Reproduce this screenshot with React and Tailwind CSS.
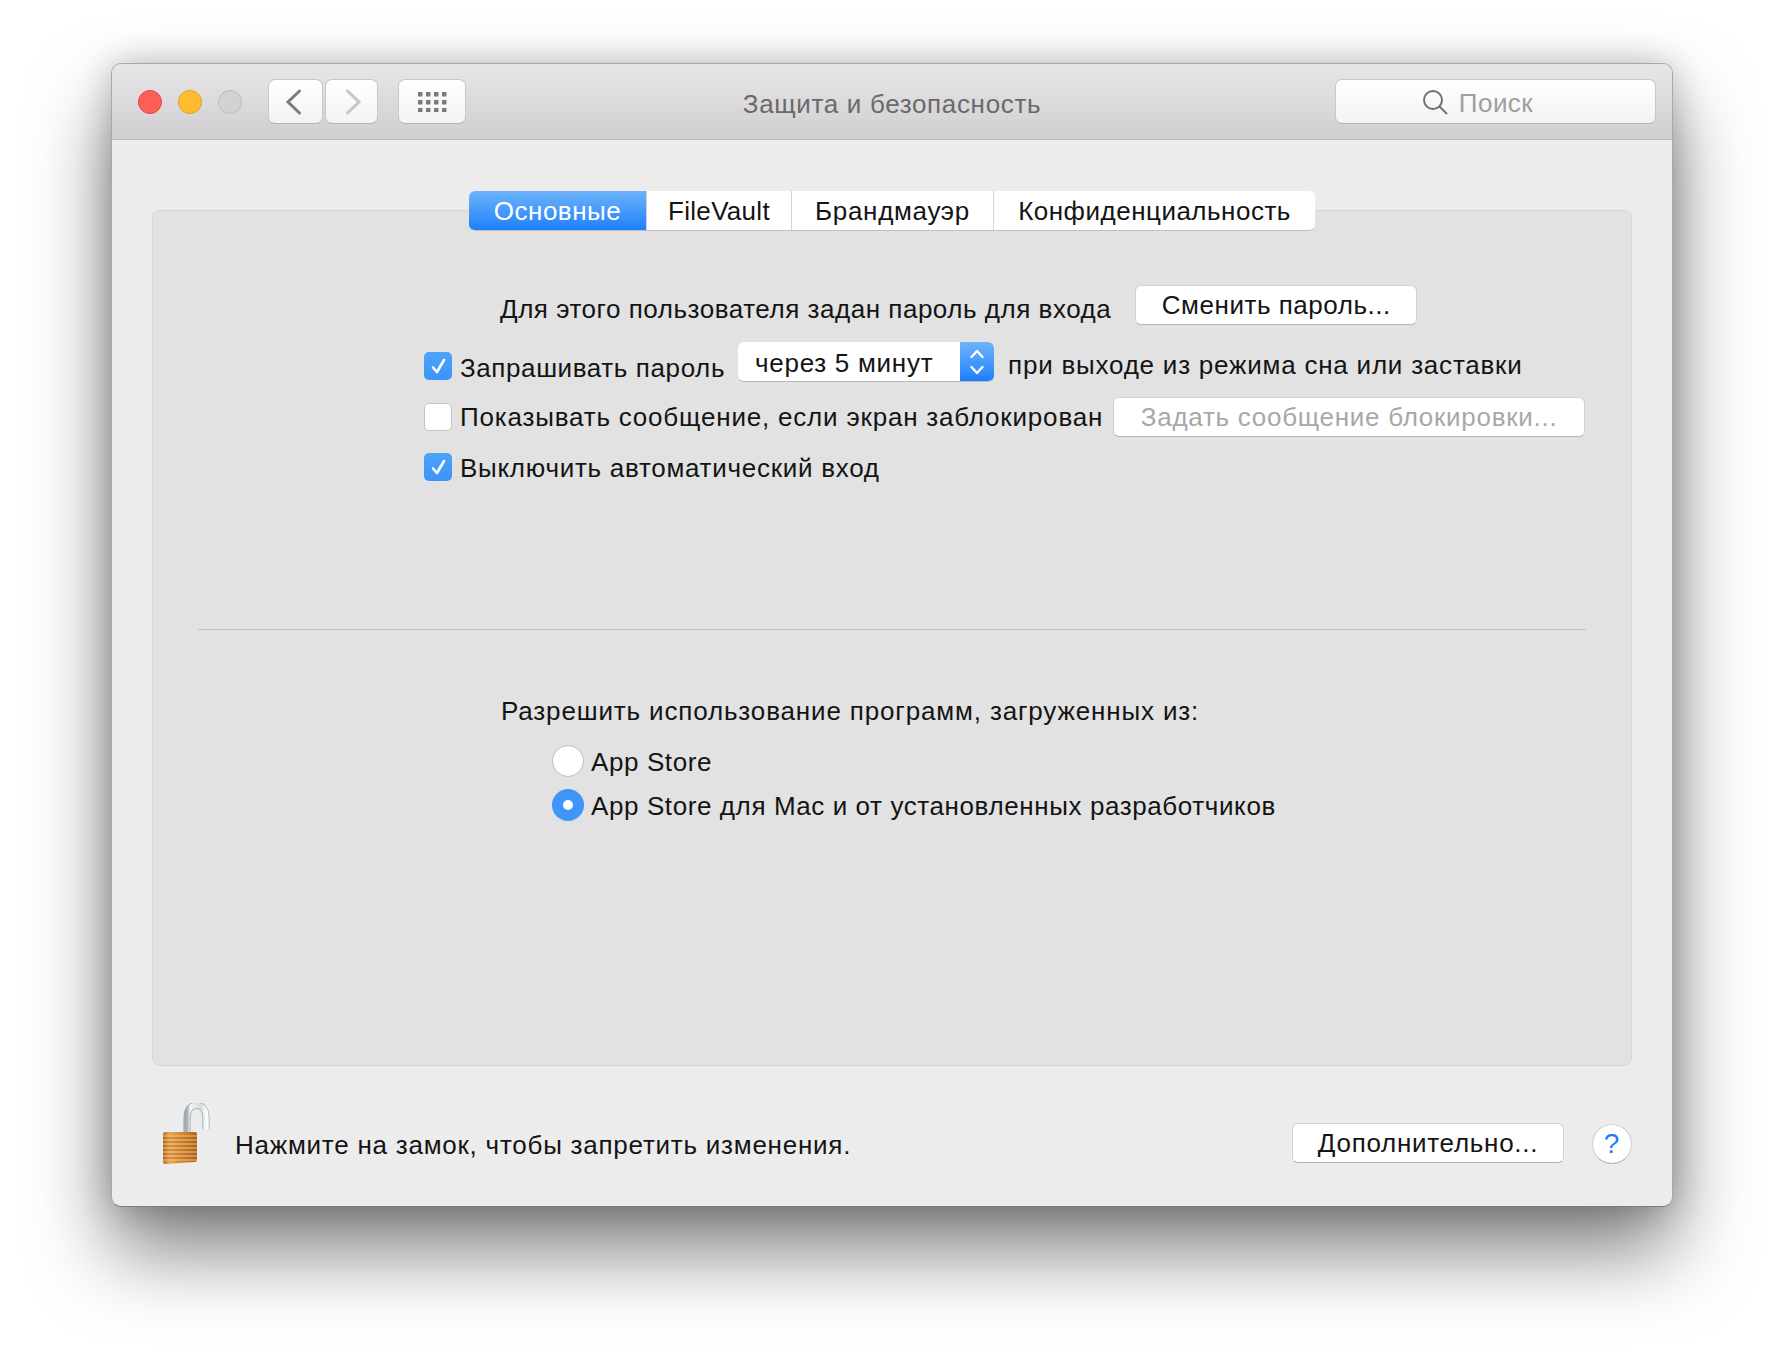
const font = { fontFamily: '"Liberation Sans", Arial, sans-serif' };

function Check({ on }) {
  if (!on) {
    return <div className="h-[28px] w-[28px] shrink-0 rounded-[5px] border border-[#c4c4c4] bg-white" />;
  }
  return (
    <div className="flex h-[28px] w-[28px] shrink-0 items-center justify-center rounded-[5px] bg-gradient-to-b from-[#4da3fb] to-[#3d93f8]">
      <svg width="17" height="18" viewBox="0 0 17 18" fill="none" stroke="#fff" strokeWidth="2.6" strokeLinecap="round" strokeLinejoin="round">
        <path d="M3 10.5 L7 15 L14 3" />
      </svg>
    </div>
  );
}

function Btn({ className, children }) {
  return (
    <div className={"flex h-[40px] shrink-0 items-center justify-center rounded-[6px] border border-[#d2d2d2] border-b-[#b4b4b4] bg-white " + className}>
      {children}
    </div>
  );
}

function Tab({ active, className, children }) {
  return (
    <div className={"flex h-full items-center justify-center border-r border-[#d4d4d4] last:border-r-0 " + (active ? "bg-gradient-to-b from-[#6cb3fa] to-[#1a7ffb] text-white " : "text-[#141414] ") + className}>
      {children}
    </div>
  );
}

function Lock() {
  return (
    <svg width="48" height="62" viewBox="0 0 48 62" className="mt-[1px] shrink-0">
      <defs>
        <linearGradient id="shackle" x1="0" x2="1" y1="0" y2="0">
          <stop offset="0" stopColor="#a4acb1" />
          <stop offset="0.18" stopColor="#f4f6f8" />
          <stop offset="0.7" stopColor="#d3d9dd" />
          <stop offset="1" stopColor="#f8fafb" />
        </linearGradient>
        <linearGradient id="body" x1="0" x2="1" y1="0" y2="0">
          <stop offset="0" stopColor="#b96f22" />
          <stop offset="0.2" stopColor="#eaa552" />
          <stop offset="0.5" stopColor="#d98a35" />
          <stop offset="0.75" stopColor="#c97a28" />
          <stop offset="1" stopColor="#a8631d" />
        </linearGradient>
      </defs>
      <path d="M25 30 V15 C25 6 29 2.5 34.5 2.5 C40 2.5 44 6 44 15 V26" fill="none" stroke="#9aa1a6" strokeWidth="7" />
      <path d="M25 30 V15 C25 6 29 2.5 34.5 2.5 C40 2.5 44 6 44 15 V26" fill="none" stroke="url(#shackle)" strokeWidth="5.6" />
      <path d="M1 31 Q1 29 3 29 H33 Q35 29 35 31 V57 Q35 59 33 59 L3 61 Q1 61 1 59 Z" fill="url(#body)" />
      {[33, 37, 41, 45, 49, 53, 57].map((y) => (
        <path key={y} d={`M1 ${y} H35`} stroke="#f6c88a" strokeOpacity="0.55" strokeWidth="1.3" />
      ))}
      {[35, 39, 43, 47, 51, 55].map((y) => (
        <path key={y} d={`M1 ${y} H35`} stroke="#8f5316" strokeOpacity="0.45" strokeWidth="1" />
      ))}
    </svg>
  );
}

export default function App() {
  return (
    <div style={font} className="h-[1366px] w-[1784px] overflow-hidden bg-white pl-[111px] pt-[63px] text-[26px] leading-[32px] tracking-[0.72px] text-[#141414]">
      <div className="flex h-[1144px] w-[1562px] flex-col overflow-hidden rounded-[10px] border border-[#a8a8a8] border-b-[#7c7c7c] bg-[#ececec] shadow-[0_44px_80px_rgba(0,0,0,0.5),0_0_34px_rgba(0,0,0,0.22)]">
        <div className="grid h-[76px] shrink-0 grid-cols-[1fr_auto_1fr] items-center border-b border-[#bdbdbd] bg-gradient-to-b from-[#e8e6e8] to-[#d0ced0] px-[16px]">
          <div className="flex items-center pl-[10px]">
            <div className="h-[24px] w-[24px] rounded-full border border-[#e0443e] bg-[#ff5f57]" />
            <div className="ml-[16px] h-[24px] w-[24px] rounded-full border border-[#dea123] bg-[#ffbd2e]" />
            <div className="ml-[16px] h-[24px] w-[24px] rounded-full border border-[#bcbcbc] bg-[#d2d2d2]" />
            <div className="ml-[26px] flex h-[45px] w-[55px] items-center justify-center rounded-[7px] border border-[#c8c8c8] border-b-[#b2b2b2] bg-gradient-to-b from-white to-[#f3f3f3] pr-[4px]">
              <svg width="18" height="26" viewBox="0 0 18 26" fill="none" stroke="#7c7c7c" strokeWidth="3" strokeLinecap="round">
                <path d="M14.5 2 L3 13 L14.5 24" />
              </svg>
            </div>
            <div className="ml-[2px] flex h-[45px] w-[53px] items-center justify-center rounded-[7px] border border-[#c8c8c8] border-b-[#b2b2b2] bg-gradient-to-b from-white to-[#f3f3f3] pl-[3px]">
              <svg width="18" height="26" viewBox="0 0 18 26" fill="none" stroke="#c6c6c6" strokeWidth="3" strokeLinecap="round">
                <path d="M3.5 2 L15 13 L3.5 24" />
              </svg>
            </div>
            <div className="ml-[20px] flex h-[45px] w-[68px] items-center justify-center rounded-[7px] border border-[#c8c8c8] border-b-[#b2b2b2] bg-gradient-to-b from-white to-[#f3f3f3]">
              <svg width="30" height="21" viewBox="0 0 30 21" fill="#7c7c7c">
                {[0, 8, 16].map((y) =>
                  [0, 8, 16, 24].map((x) => <rect key={x + "-" + y} x={x + 1} y={y + 1} width="4.5" height="4.5" />)
                )}
              </svg>
            </div>
          </div>
          <div className="pt-[5px] tracking-[0.66px] text-[#6a6a6a]">Защита и безопасность</div>
          <div className="flex justify-end">
            <div className="flex h-[45px] w-[321px] items-center justify-center rounded-[7px] border border-[#c8c8c8] border-b-[#b2b2b2] bg-gradient-to-b from-white to-[#f3f3f3] pr-[36px] tracking-[0.45px] text-[#a09e9e]">
              <svg width="26" height="26" viewBox="0 0 26 26" fill="none" stroke="#707070" strokeWidth="2" strokeLinecap="round" className="mr-[11px]">
                <circle cx="11" cy="11" r="9" />
                <path d="M17.5 17.5 L24.5 24.5" />
              </svg>
              <span className="pt-[2px]">Поиск</span>
            </div>
          </div>
        </div>

        <div className="flex flex-1 flex-col px-[40px] pt-[70px]">
          <div className="flex h-[856px] flex-col rounded-[8px] border border-[#d6d6d6] bg-[#e2e2e2]">
            <div className="relative z-10 -mt-[20px] ml-[316px] flex h-[40px] w-[846px] overflow-hidden rounded-[6px] border-b border-[#c0c0c0] bg-white">
              <Tab active className="w-[178px] tracking-[0.5px]">Основные</Tab>
              <Tab className="w-[145px] tracking-[0.3px]">FileVault</Tab>
              <Tab className="w-[202px] tracking-[0.7px]">Брандмауэр</Tab>
              <Tab className="flex-1 tracking-[0.5px]">Конфиденциальность</Tab>
            </div>

            <div className="ml-[347px] mt-[54px] flex items-center tracking-[0.53px]">
              <span className="mt-[8px]">Для этого пользователя задан пароль для входа</span>
              <Btn className="ml-[24px] w-[282px]">Сменить пароль...</Btn>
            </div>

            <div className="ml-[271px] mt-[17px] flex h-[40px] items-center">
              <div className="mt-[8px]"><Check on /></div>
              <span className="ml-[8px] mt-[11px] tracking-[0.6px]">Запрашивать пароль</span>
              <div className="ml-[13px] flex h-[40px] w-[256px] overflow-hidden rounded-[6px] border-b border-[#b8b8b8] bg-white">
                <span className="flex-1 pl-[17px] pt-[5px]">через 5 минут</span>
                <div className="flex w-[34px] items-center justify-center bg-gradient-to-b from-[#6cb3fa] to-[#1a7ffb]">
                  <svg width="16" height="30" viewBox="0 0 16 30" fill="none" stroke="#fff" strokeWidth="2.4" strokeLinecap="round" strokeLinejoin="round">
                    <path d="M2.5 10 L8 4 L13.5 10 M2.5 20 L8 26 L13.5 20" />
                  </svg>
                </div>
              </div>
              <span className="ml-[14px] mt-[6px] tracking-[0.78px]">при выходе из режима сна или заставки</span>
            </div>

            <div className="ml-[271px] mt-[15px] flex h-[40px] items-center">
              <Check />
              <span className="ml-[8px] tracking-[0.8px]">Показывать сообщение, если экран заблокирован</span>
              <Btn className="ml-[10px] w-[472px] text-[#a8a8a8]">Задать сообщение блокировки...</Btn>
            </div>

            <div className="ml-[271px] mt-[14px] flex h-[32px] items-center">
              <Check on />
              <span className="ml-[8px] mt-[2px]">Выключить автоматический вход</span>
            </div>

            <div className="mx-[45px] mt-[146px] h-px bg-[#c4c4c4]" />

            <div className="ml-[348px] mt-[65px] tracking-[0.85px]">Разрешить использование программ, загруженных из:</div>

            <div className="ml-[399px] mt-[18px] flex h-[32px] items-center tracking-[0.6px]">
              <div className="h-[32px] w-[32px] shrink-0 rounded-full border border-[#bcbcbc] bg-white" />
              <span className="ml-[7px] mt-[2px]">App Store</span>
            </div>
            <div className="ml-[399px] mt-[12px] flex h-[32px] items-center tracking-[0.6px]">
              <div className="flex h-[32px] w-[32px] shrink-0 items-center justify-center rounded-full bg-[#3f95f8]">
                <div className="h-[10px] w-[10px] rounded-full bg-white" />
              </div>
              <span className="ml-[7px] mt-[1px]">App Store для Mac и от установленных разработчиков</span>
            </div>
          </div>

          <div className="flex items-start pl-[10px] pt-[36px]">
            <Lock />
            <span className="ml-[25px] mt-[27px] tracking-[0.76px]">Нажмите на замок, чтобы запретить изменения.</span>
            <Btn className="ml-auto mt-[21px] w-[272px]">Дополнительно...</Btn>
            <div className="ml-[28px] mt-[22px] flex h-[40px] w-[40px] items-center justify-center rounded-full border border-[#cfcfcf] border-b-[#b4b4b4] bg-white text-[28px] text-[#1a7ffb]">?</div>
          </div>
        </div>
      </div>
    </div>
  );
}
